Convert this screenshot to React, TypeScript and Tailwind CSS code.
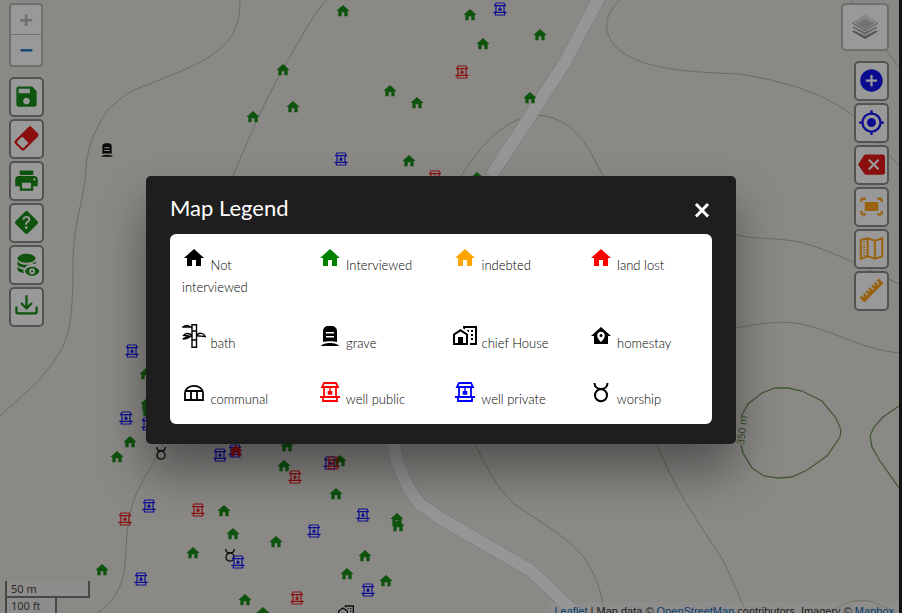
import type { ReactNode } from "react";
import {
  MdAddCircle,
  MdBackspace,
  MdFitScreen,
  MdMyLocation,
  MdPrint,
  MdSave,
} from "react-icons/md";
import { BsFillQuestionDiamondFill } from "react-icons/bs";

/* ---------- icons, all drawn on a 24 unit grid ---------- */

type Kind = "house" | "well" | "worship" | "grave" | "chief" | "bath" | "homestay" | "communal";

const glyphs: Record<Kind, ReactNode> = {
  house: <path d="M10 20v-6h4v6h5v-8h3L12 3 2 12h3v8z" />,
  well: (
    <>
      <path d="M6 3h12l2 4H4zM6 8v9M18 8v9M2 17h20M5 18v3h14v-3" fill="none" stroke="currentColor" strokeWidth="1.800" />
      <path d="M11.3 8h1.4v3H14.300V14.800H9.700v-3.800h1.600z" />
    </>
  ),
  worship: (
    <path
      d="M5.500 3c0 3 2 6 6.500 6s6.500-3 6.500-6M12 9.200a6 6 0 1 0 0 12 6 6 0 1 0 0-12z"
      fill="none"
      stroke="currentColor"
      strokeWidth="2"
    />
  ),
  grave: (
    <path
      fillRule="evenodd"
      d="M5 18V7a5 5 0 0 1 5-5h4a5 5 0 0 1 5 5v11c-3-1-11-1-14 0zM8 8v1.500h8V8zM8 12v1.500h8V12zM3 22c1-2 5-3 9-3s8 1 9 3z"
    />
  ),
  chief: (
    <path d="M10 2v2.260L12 5.590V4h10v15h-5v2h7V2H10M7.500 5L0 10v11h15V10L7.500 5M14 6v.930L15.610 8H16V6h-2m4 0v2h2V6h-2M7.500 7.500L13 11v8h-3v-6H5v6H2v-8l5.500-3.500M18 10v2h2v-2h-2m0 4v2h2v-2h-2z" />
  ),
  bath: (
    <path
      d="M10 .700h4.500v22.600H10zM10 7h4.500M10 16h4.500M10 4C7 1 3.500.800.800 3H9M10 11.500C7 8.500 3 9 1.500 11.500l6 .500L.800 15C4 15 7 14 10 11.500M14.500 11.500C17 8 21.500 9 23.300 12.500c-3-.800-6 0-8.800-1"
      fill="none"
      stroke="currentColor"
      strokeWidth="1.400"
    />
  ),
  homestay: (
    <path
      fillRule="evenodd"
      d="M12 3L2 12h3v8h14v-8h3L12 3m0 4.700c2.100 0 3.800 1.700 3.800 3.800 0 3-3.800 6.500-3.800 6.500s-3.800-3.500-3.800-6.500c0-2.100 1.700-3.800 3.800-3.800m0 2.300a1.500 1.500 0 1 0 0 3 1.500 1.500 0 1 0 0-3z"
    />
  ),
  communal: (
    <path
      d="M3 20v-7a9 7.200 0 0 1 18 0v7zM4 11h16M9 11v9M15 11v9"
      fill="none"
      stroke="currentColor"
      strokeWidth="1.800"
    />
  ),
};

function EraserIcon() {
  return (
    <svg viewBox="0 0 24 24" className="size-[27px]">
      <g transform="rotate(-45 12 12)">
        <rect x="1.600" y="6" width="20.800" height="12" rx="2.200" fill="currentColor" />
        <rect x="3.500" y="8" width="7" height="8" rx="1" className="fill-white" />
      </g>
    </svg>
  );
}

function DatabaseEyeIcon() {
  return (
    <svg viewBox="0 0 24 24" className="size-[27px]" fill="currentColor">
      <ellipse cx="12" cy="6.500" rx="8" ry="4" />
      <path d="M4 9c1.500 2.200 4.500 3.200 8 3.200s6.500-1 8-3.200v2.500c-4-.500-7.500.800-9.500 3.300C7 14.500 4 13.500 4 11.500z" />
      <path d="M4 14c1.300 1.400 3.200 2.300 5.500 2.600L9 18l1 1.600C6.500 19.300 4 18 4 16z" />
      <path
        fillRule="evenodd"
        d="M10.500 18c1.200-2.600 3.500-4 6.500-4s5.300 1.400 6.500 4c-1.200 2.600-3.500 4-6.500 4s-5.300-1.400-6.500-4zm6.500-2.600a2.600 2.600 0 1 0 0 5.200 2.600 2.600 0 1 0 0-5.200zm0 1.600a1 1 0 1 1 0 2 1 1 0 1 1 0-2z"
      />
    </svg>
  );
}

function TrayDownIcon() {
  return (
    <svg viewBox="0 0 24 24" className="size-[27px]" fill="currentColor">
      <path d="M2 12h2v5h16v-5h2v5c0 1.110-.890 2-2 2H4c-1.100 0-2-.890-2-2v-5m10 3l5.550-5.460-1.420-1.410L13 11.250V2h-2v9.250L7.880 8.130 6.460 9.550 12 15z" />
    </svg>
  );
}

function FoldedMapIcon() {
  return (
    <svg viewBox="0 0 24 24" className="size-[27px]" fill="none" stroke="currentColor" strokeWidth="1.800">
      <path d="M2.500 4.500L8.500 3l6.500 2L21.500 3v16L15 21l-6.500-2-6 2zM8.500 3v16M15 5v16" />
      <path d="M5.500 5.500v14" strokeDasharray="1.200 1.200" />
    </svg>
  );
}

function RulerIcon() {
  return (
    <svg viewBox="0 0 24 24" className="size-[27px]" fill="currentColor">
      <path d="M1.390 18.360l1.770-1.760L4.580 18l1.060-1.050-1.420-1.410 1.420-1.420 2.470 2.480 1.060-1.060-2.470-2.480 1.410-1.410 1.420 1.410L10.590 12l-1.420-1.410 1.420-1.420 2.470 2.480 1.060-1.060-2.470-2.480 1.410-1.410 1.410 1.410 1.070-1.060-1.420-1.410 1.420-1.420L18 6.700l1.070-1.060-2.470-2.480 1.760-1.770 4.250 4.250L5.640 22.610z" />
    </svg>
  );
}

function LayersIcon() {
  return (
    <svg viewBox="0 0 26 26" className="size-[26px]">
      <path d="M0 17.500l2-1 11 5.500 11-5.500 2 1L13 25z" fill="#8c8c8c" />
      <path d="M0 13.500l2-1 11 5.500 11-5.500 2 1L13 21z" fill="#a4a4a4" stroke="#fff" strokeWidth=".500" />
      <path d="M0 8.500V9.500L13 17l13-7.500V8.500L13 15.500z" fill="#8c8c8c" />
      <path d="M13 .500L26 8.500l-13 7.500L0 8.500z" fill="#e0e0e0" />
      <path d="M13 5l9 4.500-9 5.500-9-5.500z" fill="#bebebe" />
    </svg>
  );
}

function CloseIcon() {
  return (
    <svg viewBox="0 0 24 24" className="size-6" fill="none" stroke="currentColor" strokeWidth="3">
      <path d="M6 6l12 12.500M18 6L6 18.500" />
    </svg>
  );
}

/* ---------- map canvas ---------- */

type Pin = [Kind, string, number, number];

const GREEN = "#188a18";
const BLUE = "#1414f0";
const RED = "#e61919";

const pins: Pin[] = [
  ...(
    [
      [343, 11], [470, 15], [483, 44], [540, 35], [283, 70], [390, 91], [417, 103], [530, 98],
      [293, 107], [253, 117], [409, 161], [477, 178], [146, 374], [147, 404], [148, 411],
      [130, 442], [117, 457], [224, 511], [233, 534], [193, 553], [102, 570], [245, 600],
      [276, 542], [284, 466], [287, 446], [340, 461], [336, 494], [397, 519], [398, 526],
      [365, 556], [347, 574], [386, 581], [263, 613],
    ] as const
  ).map(([x, y]): Pin => ["house", GREEN, x, y]),
  ["worship", "#111", 161, 453],
  ["worship", "#111", 230, 555],
  ["grave", "#111", 107, 150],
  ["chief", "#111", 346, 612],
  ...(
    [
      [500, 9], [341, 159], [132, 351], [126, 418], [148, 424], [149, 506], [220, 455],
      [235, 451], [330, 463], [363, 515], [314, 531], [238, 562], [141, 579], [368, 590],
    ] as const
  ).map(([x, y]): Pin => ["well", BLUE, x, y]),
  ...(
    [
      [462, 72], [435, 177], [125, 519], [198, 510], [295, 477], [333, 463], [297, 598],
    ] as const
  ).map(([x, y]): Pin => ["well", RED, x, y]),
  ["house", RED, 236, 451],
];

const thinContours = [
  "M240 0C240 20 236 33 224 45C205 64 175 73 150 84C128 90 116 102 108 110C96 126 86 150 86 170C84 200 73 225 73 260C73 310 71 322 65 342C52 372 25 393 0 416",
  "M327 0C314 12 303 35 285 65C262 107 252 130 233 176L163 445C155 463 134 490 131 510C124 535 128 560 122 580C117 597 108 606 90 618",
  "M461 176C475 155 500 118 537 115C572 118 585 140 603 176C630 215 700 225 746 237C770 239 785 239 800 242C830 250 870 270 899 284",
  "M620 0C605 14 603 28 612 42C632 70 690 72 740 74C800 84 830 98 855 117C870 130 885 152 899 165",
  "M850 0C862 14 880 42 899 67",
  "M720 331C765 322 785 320 805 325C835 332 865 350 899 353",
  "M657 444C672 485 700 525 721 557C730 573 736 590 748 615",
  "M475 444C483 460 494 485 515 505C540 522 560 532 580 553C596 573 602 590 605 620",
  "M830 613C845 600 860 599 873 602L895 612",
];

const road = "M600 -4L564 64L491 176M392 440L398 464L408 487L420 504L440 518L490 547L530 570L580 617";

function MapCanvas() {
  return (
    <svg
      viewBox="0 0 899 620"
      preserveAspectRatio="xMidYMid slice"
      className="absolute inset-0 size-full"
      aria-hidden="true"
    >
      <g fill="none" stroke="#a9bc9b" strokeWidth="1">
        {thinContours.map((d) => (
          <path key={d} d={d} />
        ))}
      </g>
      <g fill="none" strokeLinejoin="round">
        <path d={road} stroke="#d6d6dc" strokeWidth="14" />
        <path d={road} stroke="#fbfbfc" strokeWidth="12" />
      </g>
      <g fill="none" stroke="#6c9457" strokeWidth="1.300">
        <path d="M741 417L748 404L762 393L775 388L788 388L802 391L822 401L836 418L841 430L840 437L827 456L807 470L792 477L778 478L764 476L752 468L743 453L741 445" />
        <path d="M899 406L883 417L874 427L870 436L872 447L880 461L899 488" />
      </g>
      <text
        x="744"
        y="445"
        transform="rotate(-84 744 445)"
        className="fill-[#4d7c3c] font-['Open_Sans',sans-serif] text-[10px]"
      >
        350 m
      </text>
      {pins.map(([kind, color, x, y]) => (
        <svg
          key={`${kind}-${color}-${x}-${y}`}
          x={x - 8}
          y={y - 8}
          width="16"
          height="16"
          viewBox="0 0 24 24"
          color={color}
          fill="currentColor"
        >
          {glyphs[kind]}
        </svg>
      ))}
    </svg>
  );
}

/* ---------- map controls ---------- */

function ToolButton({ label, tone, children }: { label: string; tone: string; children: ReactNode }) {
  return (
    <button
      type="button"
      aria-label={label}
      className={`flex h-10 w-[35px] items-center justify-center rounded-[5px] border-2 border-[#8c8b89] bg-white pb-0.5 ${tone}`}
    >
      {children}
    </button>
  );
}

function LeftControls() {
  return (
    <div className="absolute top-[3px] left-[9px] flex flex-col items-start gap-[10px]">
      <div className="flex w-[34px] flex-col overflow-hidden rounded border-2 border-[#bab8b5] bg-white font-['DejaVu_Sans_Mono',monospace] text-[22px] font-bold">
        <button type="button" aria-label="Zoom in" disabled className="h-[30px] border-b border-[#bbb] leading-[30px] text-[#bbb]">
          +
        </button>
        <button type="button" aria-label="Zoom out" className="h-[30px] leading-[28px] text-[#2a7fd0]">
          −
        </button>
      </div>
      <div className="flex flex-col gap-0.5">
        <ToolButton label="Save" tone="text-[#188a18]"><MdSave className="size-[27px]" /></ToolButton>
        <ToolButton label="Erase" tone="text-[#e61919]"><EraserIcon /></ToolButton>
        <ToolButton label="Print" tone="text-[#188a18]"><MdPrint className="size-[27px]" /></ToolButton>
        <ToolButton label="Help" tone="text-[#188a18]"><BsFillQuestionDiamondFill className="size-[23px]" /></ToolButton>
        <ToolButton label="View data" tone="text-[#188a18]"><DatabaseEyeIcon /></ToolButton>
        <ToolButton label="Download" tone="text-[#188a18]"><TrayDownIcon /></ToolButton>
      </div>
    </div>
  );
}

function RightControls() {
  return (
    <div className="absolute top-[3px] right-[10px] flex flex-col items-end gap-[10px]">
      <button
        type="button"
        aria-label="Layers"
        className="flex size-12 items-center justify-center rounded-[5px] border-2 border-[#bab8b5] bg-white"
      >
        <LayersIcon />
      </button>
      <div className="flex flex-col gap-0.5">
        <ToolButton label="Add" tone="text-[#1414f0]"><MdAddCircle className="size-[27px]" /></ToolButton>
        <ToolButton label="Locate" tone="text-[#1414f0]"><MdMyLocation className="size-[27px]" /></ToolButton>
        <ToolButton label="Clear" tone="text-[#e61919]"><MdBackspace className="size-[27px] shrink-0" /></ToolButton>
        <ToolButton label="Fit to screen" tone="text-[#ffa31a]"><MdFitScreen className="size-[27px]" /></ToolButton>
        <ToolButton label="Legend" tone="text-[#ffa31a]"><FoldedMapIcon /></ToolButton>
        <ToolButton label="Measure" tone="text-[#ffa31a]"><RulerIcon /></ToolButton>
      </div>
    </div>
  );
}

function ScaleBar() {
  return (
    <div className="absolute bottom-[5px] left-[5px] flex flex-col items-start font-['Noto_Sans',sans-serif] text-[11px] leading-[15px] text-[#444]">
      <div className="w-[85px] border-2 border-t-0 border-[#777] bg-white/30 pl-1">50 m</div>
      <div className="w-[52px] border-2 border-t-0 border-[#777] bg-white/30 pl-1">100 ft</div>
    </div>
  );
}

function Attribution() {
  return (
    <div className="absolute right-0 bottom-0 bg-white/30 px-[5px] font-['Liberation_Sans',Arial,sans-serif] text-[11px] leading-[18px] text-[#333]">
      <a href="#leaflet" className="text-[#0a66b5]">Leaflet</a> | Map data ©{" "}
      <a href="#osm" className="text-[#0a66b5]">OpenStreetMap</a> contributors, Imagery ©{" "}
      <a href="#mapbox" className="text-[#0a66b5]">Mapbox</a>
    </div>
  );
}

/* ---------- legend dialog ---------- */

const legend: { kind: Kind; tone: string; label: string }[] = [
  { kind: "house", tone: "text-black", label: "Not interviewed" },
  { kind: "house", tone: "text-[#008000]", label: "Interviewed" },
  { kind: "house", tone: "text-[#ffa500]", label: "indebted" },
  { kind: "house", tone: "text-[#ff0000]", label: "land lost" },
  { kind: "bath", tone: "text-black", label: "bath" },
  { kind: "grave", tone: "text-black", label: "grave" },
  { kind: "chief", tone: "text-black", label: "chief House" },
  { kind: "homestay", tone: "text-black", label: "homestay" },
  { kind: "communal", tone: "text-black", label: "communal" },
  { kind: "well", tone: "text-[#ff0000]", label: "well public" },
  { kind: "well", tone: "text-[#0000ff]", label: "well private" },
  { kind: "worship", tone: "text-black", label: "worship" },
];

function LegendDialog() {
  return (
    <div
      role="dialog"
      aria-modal="true"
      aria-labelledby="legend-title"
      className="w-full max-w-[590px] rounded-[5px] bg-[#1e1e1e] px-6 pb-5 font-['Lato',sans-serif] shadow-[0_28px_48px_rgba(0,0,0,0.4)]"
    >
      <header className="flex h-[58px] items-start justify-between pt-[18px]">
        <h2 id="legend-title" className="text-[22px] leading-7 text-white">
          Map Legend
        </h2>
        <button type="button" aria-label="Close" className="-mr-0.5 pt-1 text-white">
          <CloseIcon />
        </button>
      </header>
      <ul className="grid grid-cols-4 rounded-md bg-white text-[13px] leading-[22px] font-light text-black">
        {legend.map(({ kind, tone, label }) => (
          <li key={label} className="px-3 pt-3 pb-3.5">
            <svg viewBox="0 0 24 24" className={`mr-px inline size-6 align-baseline ${tone}`} fill="currentColor" aria-hidden="true">
              {glyphs[kind]}
            </svg>{" "}
            {label}
          </li>
        ))}
      </ul>
    </div>
  );
}

export default function App() {
  return (
    <div className="relative h-screen overflow-hidden bg-[#1e1e1e] pr-[3px]">
      <main className="relative h-[calc(100vh+7px)] overflow-hidden bg-[#e8e4e0]">
        <MapCanvas />
        <LeftControls />
        <RightControls />
        <ScaleBar />
        <Attribution />
      </main>
      <div className="absolute inset-0 flex items-center justify-center bg-black/40 pt-[7px] pr-5">
        <LegendDialog />
      </div>
    </div>
  );
}
